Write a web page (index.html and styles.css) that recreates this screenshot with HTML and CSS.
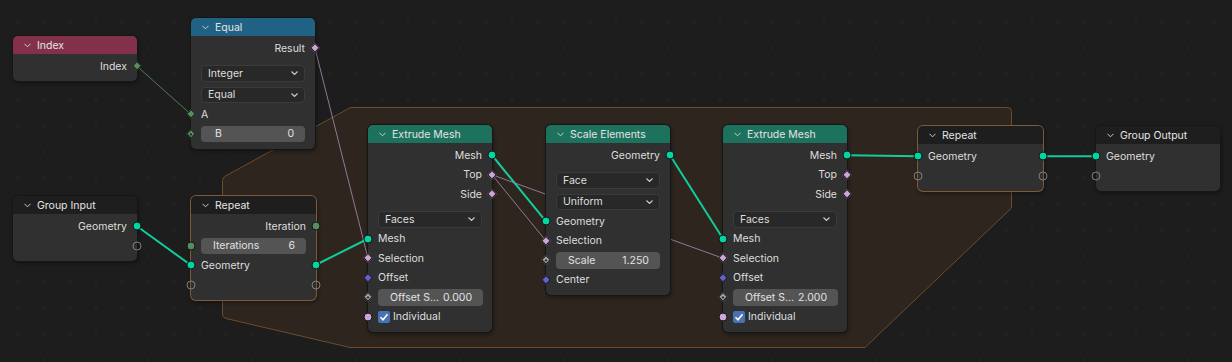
FILE: index.html
```html
<!DOCTYPE html>
<html>
<head>
<meta charset="utf-8">
<link rel="stylesheet" href="styles.css">
</head>
<body>
<div class="canvas">
  <svg class="layer" width="1232" height="362" viewBox="0 0 1232 362">
    <path class="zone" d="M350.5 107.5 L1007.5 107.5 Q1011.5 107.5 1011.5 111.5 L1011.5 208 L865 347.5 L350 347.5 L226 318.5 Q222.5 317.5 222.5 314 L222.5 180.5 Q222.5 177.5 225.5 176 Z"/>
    <line class="lk int" x1="137" y1="66.25" x2="191" y2="114.45"/>
    <line class="lk bool" x1="315" y1="48.25" x2="368" y2="258.25"/>
    <line class="lk geo" x1="137" y1="226.25" x2="191" y2="265.25"/>
    <line class="lk geo" x1="315" y1="265.25" x2="368" y2="238.75"/>
    <line class="lk geo" x1="492" y1="155.25" x2="546" y2="221.45"/>
    <line class="lk bool" x1="492" y1="174.75" x2="546" y2="240.95"/>
    <line class="lk bool" x1="492" y1="174.75" x2="723" y2="258.25"/>
    <line class="lk geo" x1="670" y1="155.25" x2="723" y2="238.75"/>
    <line class="lk geo" x1="847" y1="155.25" x2="918" y2="156.25"/>
    <line class="lk geo" x1="1042" y1="156.25" x2="1096" y2="156.25"/>
  </svg>

  <!-- Index -->
  <div class="node n-index">
    <div class="hdr h-input"><svg class="chev" viewBox="0 0 8 5"><polyline points="0.5,0.5 4,4 7.5,0.5"/></svg><span>Index</span></div>
    <div class="body">
      <div class="row out">Index<span class="sk r d int"></span></div>
    </div>
  </div>

  <!-- Equal -->
  <div class="node n-equal">
    <div class="hdr h-conv"><svg class="chev" viewBox="0 0 8 5"><polyline points="0.5,0.5 4,4 7.5,0.5"/></svg><span>Equal</span></div>
    <div class="body">
      <div class="row out">Result<span class="sk r d bool"></span></div>
      <div class="gap"></div>
      <div class="row dd-row"><div class="dd"><span>Integer</span><svg class="ddchev" viewBox="0 0 7 4"><polyline points="0.5,0.5 3.5,3.5 6.5,0.5"/></svg></div></div>
      <div class="row dd-row"><div class="dd"><span>Equal</span><svg class="ddchev" viewBox="0 0 7 4"><polyline points="0.5,0.5 3.5,3.5 6.5,0.5"/></svg></div></div>
      <div class="row"><span class="sk l d int"></span>A</div>
      <div class="row"><span class="sk l d int fd"></span><div class="field"><span class="fl">B</span><span>0</span></div></div>
    </div>
  </div>

  <!-- Group Input -->
  <div class="node n-gin">
    <div class="hdr h-group"><svg class="chev" viewBox="0 0 8 5"><polyline points="0.5,0.5 4,4 7.5,0.5"/></svg><span>Group Input</span></div>
    <div class="body">
      <div class="row out">Geometry<span class="sk r c geo"></span></div>
      <div class="row out"><span class="sk r c hol"></span></div>
    </div>
  </div>

  <!-- Repeat input -->
  <div class="node zone-node n-rep1">
    <div class="hdr h-group"><svg class="chev" viewBox="0 0 8 5"><polyline points="0.5,0.5 4,4 7.5,0.5"/></svg><span>Repeat</span></div>
    <div class="body">
      <div class="row out">Iteration<span class="sk r c int"></span></div>
      <div class="row"><span class="sk l c int"></span><div class="field"><span>Iterations</span><span>6</span></div></div>
      <div class="row">Geometry<span class="sk l c geo"></span><span class="sk r c geo"></span></div>
      <div class="row"><span class="sk l c hol"></span><span class="sk r c hol"></span></div>
    </div>
  </div>

  <!-- Extrude Mesh 1 -->
  <div class="node n-ext1">
    <div class="hdr h-geo"><svg class="chev" viewBox="0 0 8 5"><polyline points="0.5,0.5 4,4 7.5,0.5"/></svg><span>Extrude Mesh</span></div>
    <div class="body">
      <div class="row out">Mesh<span class="sk r c geo"></span></div>
      <div class="row out">Top<span class="sk r d bool"></span></div>
      <div class="row out">Side<span class="sk r d bool"></span></div>
      <div class="gap"></div>
      <div class="row dd-row"><div class="dd"><span>Faces</span><svg class="ddchev" viewBox="0 0 7 4"><polyline points="0.5,0.5 3.5,3.5 6.5,0.5"/></svg></div></div>
      <div class="row"><span class="sk l c geo"></span>Mesh</div>
      <div class="row"><span class="sk l d bool"></span>Selection</div>
      <div class="row"><span class="sk l d vec"></span>Offset</div>
      <div class="row"><span class="sk l d flt fd"></span><div class="field"><span>Offset S...</span><span>0.000</span></div></div>
      <div class="row"><span class="sk l c bool"></span><span class="cb"><svg viewBox="0 0 12 12"><polyline points="2.5,6.3 5,8.8 9.5,3.2"/></svg></span>Individual</div>
    </div>
  </div>

  <!-- Scale Elements -->
  <div class="node n-scale">
    <div class="hdr h-geo"><svg class="chev" viewBox="0 0 8 5"><polyline points="0.5,0.5 4,4 7.5,0.5"/></svg><span>Scale Elements</span></div>
    <div class="body">
      <div class="row out">Geometry<span class="sk r c geo"></span></div>
      <div class="gap"></div>
      <div class="row dd-row"><div class="dd"><span>Face</span><svg class="ddchev" viewBox="0 0 7 4"><polyline points="0.5,0.5 3.5,3.5 6.5,0.5"/></svg></div></div>
      <div class="row dd-row"><div class="dd"><span>Uniform</span><svg class="ddchev" viewBox="0 0 7 4"><polyline points="0.5,0.5 3.5,3.5 6.5,0.5"/></svg></div></div>
      <div class="row"><span class="sk l c geo"></span>Geometry</div>
      <div class="row"><span class="sk l d bool"></span>Selection</div>
      <div class="row"><span class="sk l d flt fd"></span><div class="field"><span>Scale</span><span>1.250</span></div></div>
      <div class="row"><span class="sk l d vec"></span>Center</div>
    </div>
  </div>

  <!-- Extrude Mesh 2 -->
  <div class="node n-ext2">
    <div class="hdr h-geo"><svg class="chev" viewBox="0 0 8 5"><polyline points="0.5,0.5 4,4 7.5,0.5"/></svg><span>Extrude Mesh</span></div>
    <div class="body">
      <div class="row out">Mesh<span class="sk r c geo"></span></div>
      <div class="row out">Top<span class="sk r d bool"></span></div>
      <div class="row out">Side<span class="sk r d bool"></span></div>
      <div class="gap"></div>
      <div class="row dd-row"><div class="dd"><span>Faces</span><svg class="ddchev" viewBox="0 0 7 4"><polyline points="0.5,0.5 3.5,3.5 6.5,0.5"/></svg></div></div>
      <div class="row"><span class="sk l c geo"></span>Mesh</div>
      <div class="row"><span class="sk l d bool"></span>Selection</div>
      <div class="row"><span class="sk l d vec"></span>Offset</div>
      <div class="row"><span class="sk l d flt fd"></span><div class="field"><span>Offset S...</span><span>2.000</span></div></div>
      <div class="row"><span class="sk l c bool"></span><span class="cb"><svg viewBox="0 0 12 12"><polyline points="2.5,6.3 5,8.8 9.5,3.2"/></svg></span>Individual</div>
    </div>
  </div>

  <!-- Repeat output -->
  <div class="node zone-node n-rep2">
    <div class="hdr h-group"><svg class="chev" viewBox="0 0 8 5"><polyline points="0.5,0.5 4,4 7.5,0.5"/></svg><span>Repeat</span></div>
    <div class="body">
      <div class="row">Geometry<span class="sk l c geo"></span><span class="sk r c geo"></span></div>
      <div class="row"><span class="sk l c hol"></span><span class="sk r c hol"></span></div>
    </div>
  </div>

  <!-- Group Output -->
  <div class="node n-gout">
    <div class="hdr h-group"><svg class="chev" viewBox="0 0 8 5"><polyline points="0.5,0.5 4,4 7.5,0.5"/></svg><span>Group Output</span></div>
    <div class="body">
      <div class="row">Geometry<span class="sk l c geo"></span></div>
      <div class="row"><span class="sk l c hol"></span></div>
    </div>
  </div>
</div>
</body>
</html>
```

FILE: styles.css
```css
* { box-sizing: border-box; }

body {
  margin: 0;
  background: #1d1d1d;
  font-family: Inter, "DejaVu Sans", sans-serif;
  font-size: 10.5px;
  color: #dedede;
}

.canvas {
  position: relative;
  width: 1232px;
  height: 362px;
  overflow: hidden;
  background-color: #1d1d1d;
  background-image: radial-gradient(circle, #262626 0.8px, transparent 1.2px);
  background-size: 26px 26px;
  background-position: 5px 9px;
}

.layer {
  position: absolute;
  left: 0;
  top: 0;
}

.zone {
  fill: #2d251e;
  stroke: #6d4c2c;
  stroke-width: 1;
}

.lk { fill: none; }
.lk.geo { stroke: #12cc9c; stroke-width: 2; }
.lk.bool { stroke: #a487ad; stroke-width: 1; opacity: 0.85; }
.lk.int { stroke: #4d7c50; stroke-width: 1; }

/* nodes */
.node {
  position: absolute;
  width: 124px;
  background: #303030;
  border-radius: 5px;
  box-shadow: 0 0 0 1px #161616, 1px 2px 4px rgba(0, 0, 0, 0.45);
}

.zone-node {
  width: 125px;
  box-shadow: 0 0 0 1px #805a34, 1px 2px 4px rgba(0, 0, 0, 0.45);
}

.n-index { left: 13px; top: 36px; }
.n-equal { left: 191px; top: 18px; }
.n-gin   { left: 13px; top: 196px; }
.n-rep1  { left: 191px; top: 196px; }
.n-ext1  { left: 368px; top: 125px; }
.n-scale { left: 546px; top: 125px; }
.n-ext2  { left: 723px; top: 125px; }
.n-rep2  { left: 918px; top: 126px; }
.n-gout  { left: 1096px; top: 126px; }

.hdr {
  height: 18px;
  display: flex;
  align-items: center;
  gap: 6px;
  padding-left: 11px;
  border-radius: 5px 5px 0 0;
  color: #e4e4e4;
}

.h-input { background: #83314a; }
.h-conv  { background: #1f6283; }
.h-geo   { background: #1d725e; }
.h-group { background: #1e1e1e; }

.chev {
  width: 7px;
  height: 5px;
  flex: none;
}
.chev polyline {
  fill: none;
  stroke: #d0d0d0;
  stroke-width: 1.1;
}

.body {
  padding: 2.5px 0 5px;
}

.row {
  position: relative;
  height: 19.5px;
  display: flex;
  align-items: center;
  padding: 0 10px;
  white-space: nowrap;
}

.row.out { justify-content: flex-end; }

.gap { height: 5.5px; }

.dd-row + .dd-row { margin-top: 2.2px; }

.dd {
  flex: 1;
  height: 16.5px;
  background: #282828;
  border: 1px solid #3b3b3b;
  border-radius: 4px;
  display: flex;
  align-items: center;
  justify-content: space-between;
  padding: 0 6px 0 6px;
}

.ddchev {
  width: 7px;
  height: 4px;
}
.ddchev polyline {
  fill: none;
  stroke: #cfcfcf;
  stroke-width: 1.1;
}

.field {
  flex: 1;
  height: 16.5px;
  background: #545454;
  border-radius: 4px;
  display: flex;
  align-items: center;
  justify-content: space-between;
  gap: 4px;
  padding: 0 11px 0 12px;
  color: #e2e2e2;
}
.field .fl { padding-left: 2px; }

.cb {
  width: 12px;
  height: 12px;
  background: #4772b3;
  border-radius: 2px;
  margin-right: 3px;
  display: flex;
}
.cb svg { width: 12px; height: 12px; }
.cb polyline {
  fill: none;
  stroke: #ffffff;
  stroke-width: 1.6;
}

/* sockets */
.sk {
  position: absolute;
  top: 50%;
  width: 9px;
  height: 9px;
  border: 1px solid #141414;
}
.sk.l { left: 0; }
.sk.r { left: 100%; }

.sk.c {
  border-radius: 50%;
  transform: translate(-50%, -50%);
}
.sk.d {
  width: 7.2px;
  height: 7.2px;
  transform: translate(-50%, -50%) rotate(45deg);
}

.sk.hol {
  width: 9px;
  height: 9px;
  background: transparent;
  border: 1px solid #7e7e7e;
}

.geo  { background: #00d6a3; }
.int  { background: #598c5c; }
.bool { background: #cca6d6; }
.vec  { background: #6363c7; }
.flt  { background: #a1a1a1; }

.fd::after {
  content: "";
  position: absolute;
  left: 50%;
  top: 50%;
  width: 2.2px;
  height: 2.2px;
  background: #262626;
  transform: translate(-50%, -50%);
}
```
